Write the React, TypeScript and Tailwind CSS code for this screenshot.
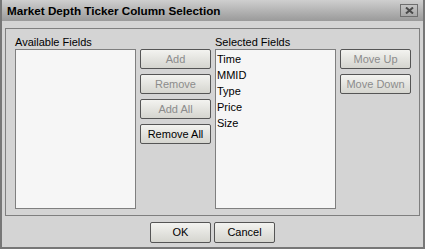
import React from 'react';

const font = { fontFamily: '"Liberation Sans", Arial, sans-serif' };

const Btn = ({ label, disabled = false, w = 'w-[71px]', h = 'h-[20px]' }: { label: string; disabled?: boolean; w?: string; h?: string }) => (
  <button
    className={`${w} ${h} rounded-[2px] border border-[#555555] bg-gradient-to-b from-[#f3f3f0] to-[#d5d5cf] text-[11px] leading-none ${
      disabled ? 'text-[#8c8c8c]' : 'text-black'
    }`}
  >
    {label}
  </button>
);

const ListBox = ({ items }: { items: string[] }) => (
  <div className="w-[121px] h-[160px] border border-[#7f7f7f] bg-[#f6f6f6] pt-[1px]">
    {items.map((it) => (
      <div key={it} className="h-[16px] pl-[1px] text-[11px] leading-[16px] text-black">
        {it}
      </div>
    ))}
  </div>
);

export default function App() {
  return (
    <div style={font} className="w-[425px] h-[249px] flex flex-col bg-[#d4d4d4] border-x-2 border-b-2 border-[#777777]">
      {/* title bar */}
      <div className="h-[21px] flex items-center justify-between bg-gradient-to-b from-[#cfcfcf] to-[#9a9a9a] pl-[5px] pr-[5px]">
        <span className="text-[11.7px] font-bold text-black">Market Depth Ticker Column Selection</span>
        <div className="w-[18px] h-[13px] border border-[#6e6e6e] bg-gradient-to-b from-[#c4c4c4] to-[#a8a8a8] flex items-center justify-center">
          <svg width="9" height="7" viewBox="0 0 9 7">
            <path d="M1 0.5 L8 6.5 M8 0.5 L1 6.5" stroke="#4a4a4a" strokeWidth="2" />
          </svg>
        </div>
      </div>

      {/* group panel */}
      <div className="mt-[7px] ml-[3px] w-[415px] h-[188px] border border-[#7f7f7f] flex pl-[9px] pt-[6px]">
        <div className="flex flex-col">
          <div className="h-[14px] text-[11px] leading-[14px] text-black">Available Fields</div>
          <ListBox items={[]} />
        </div>
        <div className="flex flex-col gap-[5px] ml-[4px] mt-[14px]">
          <Btn label="Add" disabled />
          <Btn label="Remove" disabled />
          <Btn label="Add All" disabled />
          <Btn label="Remove All" />
        </div>
        <div className="flex flex-col ml-[4px]">
          <div className="h-[14px] text-[11px] leading-[14px] text-black">Selected Fields</div>
          <ListBox items={['Time', 'MMID', 'Type', 'Price', 'Size']} />
        </div>
        <div className="flex flex-col gap-[5px] ml-[4px] mt-[14px]">
          <Btn label="Move Up" disabled />
          <Btn label="Move Down" disabled />
        </div>
      </div>

      {/* footer */}
      <div className="flex justify-center gap-[3px] mt-[6px]">
        <Btn label="OK" w="w-[61px]" h="h-[21px]" />
        <Btn label="Cancel" w="w-[61px]" h="h-[21px]" />
      </div>
    </div>
  );
}
